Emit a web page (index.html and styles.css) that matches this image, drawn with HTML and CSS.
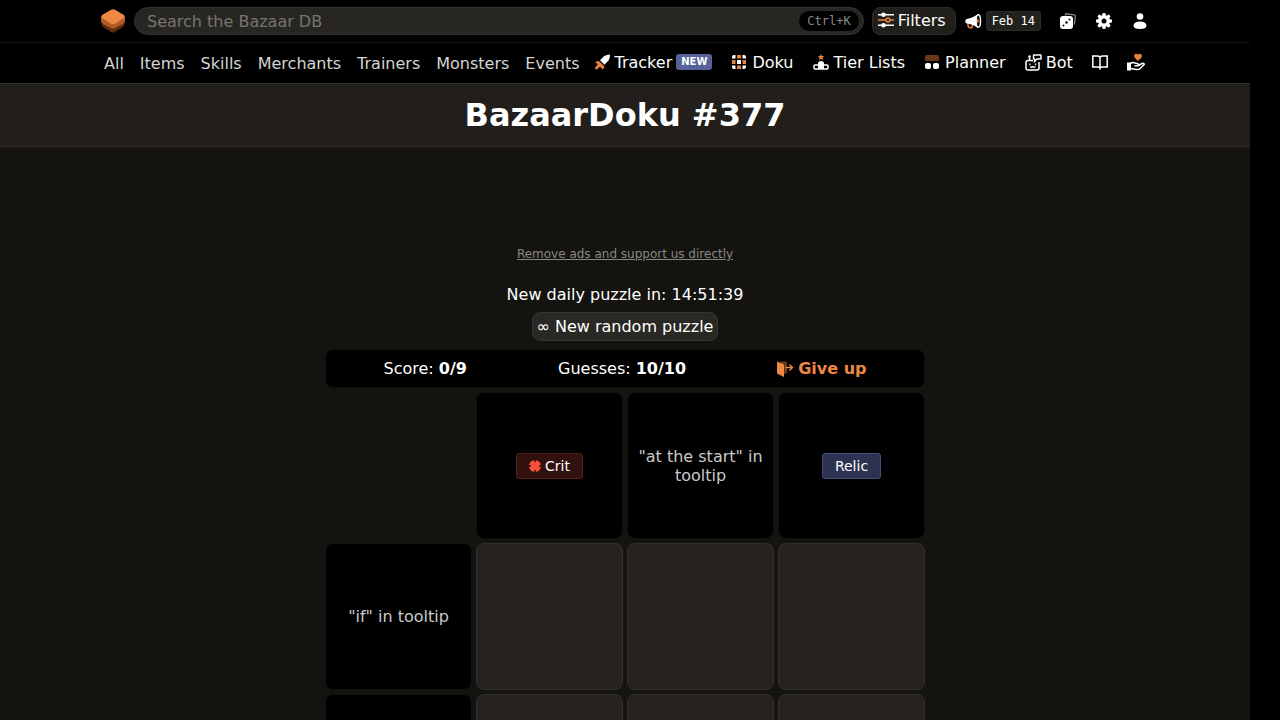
FILE: index.html
```
<!DOCTYPE html>
<html lang="en">
<head>
  <meta charset="UTF-8">
  <meta name="viewport" content="width=device-width, initial-scale=1">
  <title>BazaarDoku #377</title>
  <link rel="stylesheet" href="styles.css">
</head>
<body>
  <div class="page">
    <header>
      <div class="topbar">
        <div class="wrap topbar-inner">
          <a class="logo" href="#" aria-label="Home">
            <svg width="26" height="26" viewBox="0 0 26 26">
              <path fill="#5a2e12" d="M2 16l11-5 11 5q1 2-1 3l-8 5q-2 1-4 0l-8-5q-2-1-1-3z"/>
              <path fill="#b25a25" d="M1 9h24v4q0 2-2 3l-8 4q-2 1-4 0l-8-4q-2-1-2-3z"/>
              <path fill="#ee8843" d="M11 1.700q2-1 4 0l8.500 5q2.500 1.800 0 3.600l-8.500 5.500q-2 1-4 0l-8.500-5.500q-2.500-1.800 0-3.600z"/>
            </svg>
          </a>
          <div class="search">
            <input id="search" type="text" placeholder="Search the Bazaar DB" aria-label="Search the Bazaar DB">
            <kbd>Ctrl+K</kbd>
          </div>
          <button class="filters">
            <svg width="16" height="16" viewBox="0 0 16 16">
              <path d="M0 2.800h16M0 13.200h16" stroke="#fff" stroke-width="1.500"/>
              <path d="M0 8h16" stroke="#e8833f" stroke-width="1.500"/>
              <circle cx="5.500" cy="2.800" r="2.300" fill="#fff"/>
              <circle cx="10" cy="8" r="1.900" fill="#211f1c" stroke="#e8833f" stroke-width="1.500"/>
              <circle cx="5.500" cy="13.200" r="2.300" fill="#fff"/>
            </svg>
            Filters
          </button>
          <a class="news" href="#">
            <svg width="17" height="16" viewBox="0 0 17 16">
              <path d="M3 10.500v2.500q1.500 2.500 4 1.500l.5-3" fill="none" stroke="#e8833f" stroke-width="1.500"/>
              <path d="M13 1Q8 5 1.500 6q-2.500 2.500 0 4.500Q8 11 13 15z" fill="#fff"/>
              <ellipse cx="13.300" cy="8" rx="2.200" ry="6.300" fill="#000" stroke="#fff" stroke-width="1.500"/>
              <ellipse cx="12.800" cy="8" rx="1" ry="2" fill="#e8833f"/>
            </svg>
            <span class="date">Feb 14</span>
          </a>
          <div class="tools">
            <button aria-label="Random">
              <svg width="16" height="16" viewBox="0 0 16 16">
                <path d="M5 2.500L6 .800l8 1q1.500.2 1.300 1.700l-1 8" fill="none" stroke="#888" stroke-width="1.300"/>
                <rect y="3" width="13" height="13" rx="3" fill="#fff"/>
                <circle cx="3.500" cy="12.500" r="1"/><circle cx="6.500" cy="9.500" r="1.200"/><circle cx="9.500" cy="6.500" r="1"/>
              </svg>
            </button>
            <button aria-label="Settings">
              <svg width="16" height="16" viewBox="0 0 16 16">
                <g fill="#fff">
                  <rect x="6.300" width="3.400" height="16" rx="1"/>
                  <rect x="6.300" width="3.400" height="16" rx="1" transform="rotate(45 8 8)"/>
                  <rect x="6.300" width="3.400" height="16" rx="1" transform="rotate(90 8 8)"/>
                  <rect x="6.300" width="3.400" height="16" rx="1" transform="rotate(135 8 8)"/>
                  <circle cx="8" cy="8" r="5.900"/>
                </g>
                <circle cx="8" cy="8" r="2.500"/>
              </svg>
            </button>
            <button aria-label="Account">
              <svg width="16" height="16" viewBox="0 0 16 16" fill="#fff">
                <circle cx="8" cy="3.500" r="3.300"/>
                <path d="M1.500 12.500Q2 8.500 8 8.500t6.500 4Q14.500 16 8 16t-6.500-3.500z"/>
              </svg>
            </button>
          </div>
        </div>
      </div>
      <nav class="wrap nav">
        <div class="nav-links">
          <a href="#">All</a>
          <a href="#">Items</a>
          <a href="#">Skills</a>
          <a href="#">Merchants</a>
          <a href="#">Trainers</a>
          <a href="#">Monsters</a>
          <a href="#">Events</a>
        </div>
        <div class="nav-tools">
          <a href="#">
            <svg width="17" height="16" viewBox="0 0 17 16">
              <path fill="#e8833f" d="M3.500 7l2 .500 4.500 4.500.5 1.500-2 2L7 13.500l-1.500-.5-2.500 2.500-2-.5.5-2L3.500 11 3 9.500 1 8.500z"/>
              <path fill="#fff" d="M16 .500Q16 4 14.500 6.500L10.500 10.800 6 6.300 10 2.300Q12.500.600 16 .500z"/>
            </svg>
            Tracker <span class="new">NEW</span>
          </a>
          <a href="#">
            <svg width="17" height="16" viewBox="0 0 17 16">
              <path fill="#fff" d="M4.500 1v3.500H1V3q0-2 2-2zM11.500 1H13q2 0 2 2v1.500h-3.500zM1 11.500h3.500V15H3q-2 0-2-2zM11.500 11.500H15V13q0 2-2 2h-1.500zM6 6h4v4H6z"/>
              <path fill="#e8833f" d="M6 1h4v3.500H6zM1 6h3.500v4H1zM11.500 6H15v4h-3.500zM6 11.500h4V15H6z"/>
            </svg>
            Doku
          </a>
          <a href="#">
            <svg width="17" height="16" viewBox="0 0 17 16">
              <path fill="#e8833f" d="M8 0l.9 2 2.300.200-1.700 1.500.5 2.300L8 4.900 6 6l.5-2.300L4.800 2.200 7.100 2z"/>
              <path fill="#fff" d="M5 9.500Q5 7 8 7t3 2.500V15H5z"/>
              <rect x="1" y="11" width="14" height="4" rx="1" fill="none" stroke="#fff" stroke-width="1.500"/>
            </svg>
            Tier Lists
          </a>
          <a href="#">
            <svg width="17" height="16" viewBox="0 0 17 16">
              <rect x="1" y="1" width="14" height="6" rx="1.500" fill="#6b371a"/>
              <rect x="1" y="9" width="6" height="6" rx="2" fill="#fff"/>
              <rect x="9" y="9" width="6" height="6" rx="2" fill="#fff"/>
            </svg>
            Planner
          </a>
          <a href="#">
            <svg width="17" height="17" viewBox="0 0 17 17" fill="none" stroke="#fff" stroke-width="1.500">
              <path d="M8 6.500H3q-2 0-2 2V14q0 2 2 2h9q2 0 2-2V8M4.500 6.500V3"/>
              <circle cx="4.500" cy="2.500" r="1.200" fill="#fff" stroke="none"/>
              <path d="M9 1h6.500q.5 0 .5.500v3q0 .500-.5.500H12L9.500 7.500V5q-1 0-1-.500v-3Q8.500 1 9 1z"/>
              <path d="M5 9.500v1.800M10.500 9.500v1.800M5 12.500l1.500 1 1.300-1 1.200 1 1.500-1" stroke-width="1.200"/>
            </svg>
            Bot
          </a>
          <a href="#" aria-label="Guide">
            <svg width="16" height="16" viewBox="0 0 16 16" fill="none" stroke="#fff" stroke-width="1.500">
              <path d="M8 3Q7 2 5 2H.800v11H6q1.500 0 2 1 .5-1 2-1h5.200V2H11Q9 2 8 3zM8 3v12.500"/>
            </svg>
          </a>
          <a href="#" aria-label="Support us">
            <svg width="18" height="18" viewBox="0 0 18 18">
              <path fill="#e8833f" d="M11 8L7.500 4.500Q6.500 2.500 7.700 1.200 9.500 0 11 1.500 12.500 0 14.300 1.200 15.500 2.500 14.500 4.500z"/>
              <path fill="#fff" d="M0 9.500h4v8H0z"/>
              <path fill="none" stroke="#fff" stroke-width="1.500" stroke-linejoin="round" d="M3.500 10.500Q6 9 8 10l3 .800q1.500 1-.5 2H7.500M10.500 13l4.500-2.500q2-.5 2.300.8L13 15.800q-1.500 1-5 .500l-4.500-.8"/>
            </svg>
          </a>
        </div>
      </nav>
    </header>

    <div class="title">
      <h1>BazaarDoku #377</h1>
    </div>

    <main>
      <a class="remove-ads" href="#">Remove ads and support us directly</a>
      <p class="countdown">New daily puzzle in: <span id="timer">14:51:39</span></p>
      <button class="random">∞ New random puzzle</button>

      <div class="game">
        <div class="stats">
          <div>Score: <b>0/9</b></div>
          <div>Guesses: <b>10/10</b></div>
          <button class="give-up">
            <svg width="17" height="16" viewBox="0 0 17 16">
              <path fill="#6b371a" d="M3 .500h7v12H3z"/>
              <path fill="#ee8843" d="M0 .500L7 3.500V16l-7-3.500z"/>
              <path d="M8.500 6.500H15M12.500 3.500l3 3-3 3" fill="none" stroke="#ee8843" stroke-width="1.300"/>
            </svg>
            Give up
          </button>
        </div>

        <div class="board">
          <div></div>
          <div class="clue">
            <span class="tag tag-crit">
              <svg width="12" height="12" viewBox="0 0 12 12">
                <circle cx="6" cy="6" r="6" fill="#f84f3d"/>
                <path d="M6 0v2M6 10V12M0 6h2M10 6H12" stroke="#31110e" stroke-width="1.500"/>
              </svg>
              Crit
            </span>
          </div>
          <div class="clue">"at the start" in tooltip</div>
          <div class="clue"><span class="tag tag-relic">Relic</span></div>

          <div class="clue">"if" in tooltip</div>
          <button class="cell" aria-label="Row 1, column 1"></button>
          <button class="cell" aria-label="Row 1, column 2"></button>
          <button class="cell" aria-label="Row 1, column 3"></button>

          <div class="clue"></div>
          <button class="cell" aria-label="Row 2, column 1"></button>
          <button class="cell" aria-label="Row 2, column 2"></button>
          <button class="cell" aria-label="Row 2, column 3"></button>
        </div>
      </div>
    </main>
  </div>
</body>
</html>
```
FILE: styles.css
```
* {
  box-sizing: border-box;
}
body {
  margin: 0;
  background: #000;
  color: #fff;
  font-family: "DejaVu Sans", sans-serif;
  font-size: 16px;
  line-height: 19px;
}
a {
  color: inherit;
  text-decoration: none;
}
button {
  font: inherit;
  color: inherit;
  background: none;
  border: none;
  padding: 0;
  cursor: pointer;
}
svg {
  display: block;
  flex: none;
}
.page {
  margin-right: 30px;
  min-height: 100vh;
  background: #14130f;
}
header {
  background: #000;
}
.wrap {
  max-width: 1050px;
  margin: 0 auto;
}

/* top bar */
.topbar {
  border-bottom: 1px solid #151515;
}
.topbar-inner {
  display: flex;
  align-items: center;
  height: 42px;
}
.logo {
  margin-right: 8px;
}
.search {
  flex: 1;
  display: flex;
  align-items: center;
  height: 28px;
  padding: 0 4px 0 12px;
  background: #282622;
  border: 1px solid #35332f;
  border-radius: 14px;
}
.search input {
  flex: 1;
  min-width: 0;
  padding: 0;
  font: inherit;
  color: #fff;
  background: none;
  border: none;
  outline: none;
}
.search input::placeholder {
  color: #77756f;
}
kbd {
  padding: 0 8px;
  border-radius: 10px;
  background: #000;
  color: #8b8a87;
  font-family: "DejaVu Sans Mono", monospace;
  font-size: 12px;
  line-height: 20px;
}
.filters {
  display: flex;
  align-items: center;
  gap: 4px;
  height: 28px;
  margin-left: 8px;
  padding: 0 9px 2px 5px;
  background: #211f1c;
  border: 1px solid #2d2b28;
  border-radius: 8px;
}
.news {
  display: flex;
  align-items: center;
  gap: 4px;
  margin-left: 9px;
}
.date {
  padding: 0 5px;
  background: #23211e;
  border: 1px solid #2d2b28;
  border-radius: 3px;
  font-family: "DejaVu Sans Mono", monospace;
  font-size: 12px;
  line-height: 18px;
}
.tools {
  display: flex;
  gap: 20px;
  padding: 0 2px 0 19px;
}

/* navigation */
.nav {
  display: flex;
  align-items: center;
  height: 40px;
  padding: 0 4px 2px;
}
.nav-links {
  display: flex;
  gap: 16px;
  padding-top: 2px;
  color: #d4d4d4;
}
.nav-tools {
  display: flex;
  gap: 19px;
  margin-left: 14px;
}
.nav-tools a {
  display: flex;
  align-items: center;
  gap: 4px;
}
.new {
  padding: 0 5px;
  background: #58629a;
  border-radius: 3px;
  font-size: 10px;
  font-weight: bold;
  line-height: 16px;
}

.title {
  padding: 12px 0;
  background: #211e1b;
  border-top: 1px solid #353330;
  border-bottom: 1px solid #2e2d29;
  text-align: center;
}
h1 {
  margin: 0;
  font-size: 32px;
  line-height: 38px;
}

/* puzzle */
main {
  display: flex;
  flex-direction: column;
  align-items: center;
  padding-top: 100px;
}
.remove-ads {
  color: #888783;
  font-size: 12px;
  line-height: 14px;
  text-decoration: underline;
}
.countdown {
  margin: 24px 0 8px;
}
.random {
  height: 29px;
  padding: 0 4px;
  background: #292824;
  border: 1px solid #353430;
  border-radius: 8px;
}
.game {
  width: 100%;
  max-width: 600px;
  margin-top: 8px;
}
.stats,
.clue {
  background: #000;
  border: 1px solid #11100d;
  border-radius: 8px;
}
.stats {
  display: flex;
  align-items: center;
  justify-content: space-around;
  height: 39px;
  padding: 0 12px;
}
.give-up {
  display: flex;
  align-items: center;
  gap: 4px;
  color: #ee8843;
  font-weight: bold;
}
.board {
  display: grid;
  grid-template-columns: repeat(4, 1fr);
  gap: 4px;
  margin-top: 4px;
}
.board > div,
.cell {
  aspect-ratio: 1;
}
.clue {
  display: flex;
  align-items: center;
  justify-content: center;
  padding: 8px;
  color: #c9c9c9;
  text-align: center;
}
.cell {
  background: #25221f;
  border: 1px solid #33312e;
  border-radius: 8px;
}
.tag {
  display: flex;
  align-items: center;
  gap: 4px;
  padding: 0 12px;
  border-radius: 3px;
  color: #fff;
  font-size: 14px;
  line-height: 24px;
}
.tag-crit {
  background: #31110e;
  border: 1px solid #552019;
}
.tag-relic {
  background: #2c3250;
  border: 1px solid #464d72;
}
```
